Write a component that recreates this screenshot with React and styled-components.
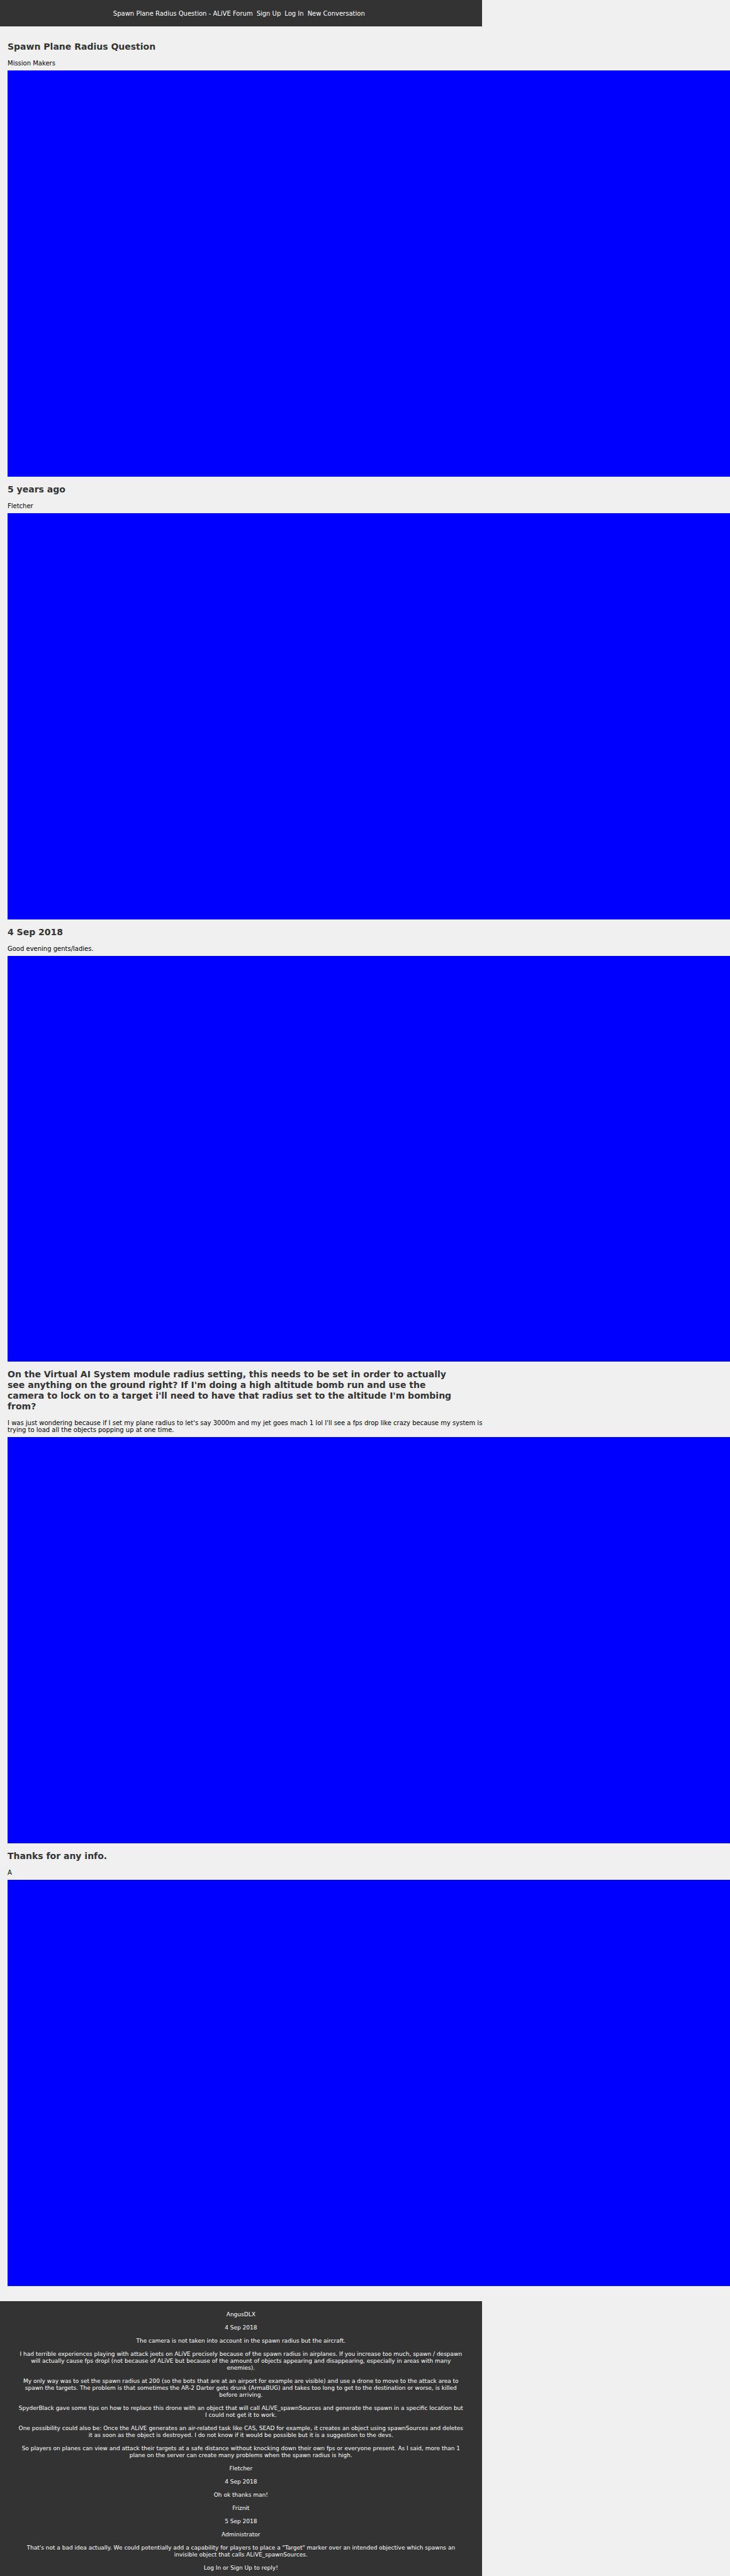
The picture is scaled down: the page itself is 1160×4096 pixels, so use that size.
import React from "react";
import styled, { createGlobalStyle } from "styled-components";

const GlobalStyle = createGlobalStyle`
  html {
    overflow-x: hidden;
  }

  body {
    margin: 0;
    background: #f0f0f0;
    color: #000;
    font-family: "DejaVu Sans", sans-serif;
    font-size: 10px;
    line-height: 11px;
  }
`;

const Page = styled.div`
  width: 66%;
`;

const Header = styled.header`
  display: flex;
  justify-content: center;
  padding: 16px 12px 15px;
  background: #333;
`;

const Nav = styled.nav`
  display: flex;
  gap: 6px;
  margin-right: 6px;
`;

const NavLink = styled.a`
  color: #fff;
  text-decoration: none;
`;

const Main = styled.main`
  padding: 12px 12px 24px;
`;

const Section = styled.section`
  display: flex;
  flex-direction: column;
`;

const Title = styled.h2`
  margin: 12px 18px 12px 0;
  color: #333;
  font-size: 14px;
  font-weight: bold;
  line-height: 17px;
`;

const Text = styled.p`
  margin: 0 -34px 6px 0;
`;

const Banner = styled.div`
  width: calc(100vw - 12px);
  aspect-ratio: 16 / 9;
  background: #00f;
`;

const Footer = styled.footer`
  display: flex;
  flex-direction: column;
  gap: 10px;
  padding: 16px 28px 7px;
  background: #333;
  color: #fff;
  font-size: 9px;
  text-align: center;
`;

const Reply = styled.p`
  margin: 0;
`;

const links = [
  "Spawn Plane Radius Question - ALiVE Forum",
  "Sign Up",
  "Log In",
  "New Conversation",
];

const sections = [
  { title: "Spawn Plane Radius Question", text: "Mission Makers" },
  { title: "5 years ago", text: "Fletcher" },
  { title: "4 Sep 2018", text: "Good evening gents/ladies." },
  {
    title:
      "On the Virtual AI System module radius setting, this needs to be set in order to actually see anything on the ground right? If I'm doing a high altitude bomb run and use the camera to lock on to a target i'll need to have that radius set to the altitude I'm bombing from?",
    text: "I was just wondering because if I set my plane radius to let's say 3000m and my jet goes mach 1 lol I'll see a fps drop like crazy because my system is trying to load all the objects popping up at one time.",
  },
  { title: "Thanks for any info.", text: "A" },
];

const replies = [
  "AngusDLX",
  "4 Sep 2018",
  "The camera is not taken into account in the spawn radius but the aircraft.",
  "I had terrible experiences playing with attack jeets on ALiVE precisely because of the spawn radius in airplanes. If you increase too much, spawn / despawn will actually cause fps dropl (not because of ALiVE but because of the amount of objects appearing and disappearing, especially in areas with many enemies).",
  "My only way was to set the spawn radius at 200 (so the bots that are at an airport for example are visible) and use a drone to move to the attack area to spawn the targets. The problem is that sometimes the AR-2 Darter gets drunk (ArmaBUG) and takes too long to get to the destination or worse, is killed before arriving.",
  "SpyderBlack gave some tips on how to replace this drone with an object that will call ALiVE_spawnSources and generate the spawn in a specific location but I could not get it to work.",
  "One possibility could also be: Once the ALiVE generates an air-related task like CAS, SEAD for example, it creates an object using spawnSources and deletes it as soon as the object is destroyed. I do not know if it would be possible but it is a suggestion to the devs.",
  "So players on planes can view and attack their targets at a safe distance without knocking down their own fps or everyone present. As I said, more than 1 plane on the server can create many problems when the spawn radius is high.",
  "Fletcher",
  "4 Sep 2018",
  "Oh ok thanks man!",
  "Friznit",
  "5 Sep 2018",
  "Administrator",
  "That's not a bad idea actually. We could potentially add a capability for players to place a \"Target\" marker over an intended objective which spawns an invisible object that calls ALiVE_spawnSources.",
  "Log In or Sign Up to reply!",
];

export default function App() {
  return (
    <>
      <GlobalStyle />
      <Page>
        <Header>
          <Nav>
            {links.map((label) => (
              <NavLink key={label} href="#">
                {label}
              </NavLink>
            ))}
          </Nav>
        </Header>
        <Main>
          {sections.map(({ title, text }) => (
            <Section key={title}>
              <Title>{title}</Title>
              <Text>{text}</Text>
              <Banner />
            </Section>
          ))}
        </Main>
        <Footer>
          {replies.map((reply, index) => (
            <Reply key={index}>{reply}</Reply>
          ))}
        </Footer>
      </Page>
    </>
  );
}
